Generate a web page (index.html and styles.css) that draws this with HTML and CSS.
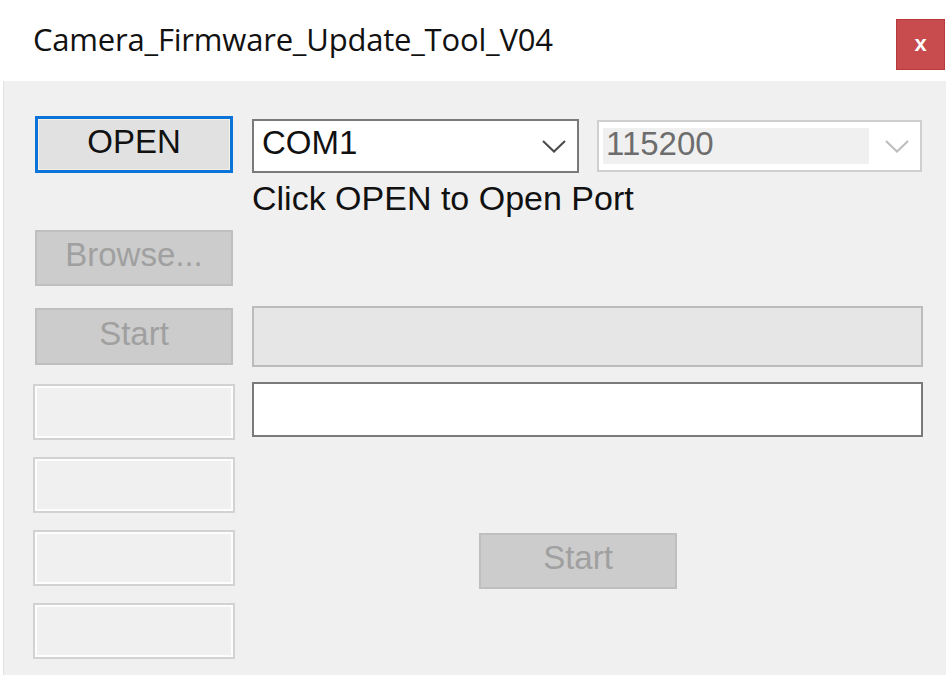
FILE: index.html
```html
<!DOCTYPE html>
<html lang="en">
<head>
    <meta charset="UTF-8">
    <title>Camera_Firmware_Update_Tool_V04</title>
    <link rel="stylesheet" href="styles.css">
</head>
<body>
    <div class="window">
        <div class="titlebar">
            <span class="title">Camera_Firmware_Update_Tool_V04</span>
            <button class="close">x</button>
        </div>
        <div class="client">
            <div class="left">
                <button class="btn btn-open">OPEN</button>
                <button class="btn btn-browse" disabled>Browse...</button>
                <button class="btn btn-start" disabled>Start</button>
                <div class="fields">
                    <div class="field"></div>
                    <div class="field"></div>
                    <div class="field"></div>
                    <div class="field"></div>
                </div>
            </div>
            <div class="right">
                <div class="combos">
                    <div class="combo combo-port">
                        <span class="combo-text">COM1</span>
                        <svg class="chevron" width="24" height="13" viewBox="0 0 24 13"><polyline points="1,1 12,11.5 23,1" fill="none" stroke="#4a4a4a" stroke-width="2"/></svg>
                    </div>
                    <div class="combo combo-baud">
                        <span class="combo-sel">115200</span>
                        <svg class="chevron" width="24" height="13" viewBox="0 0 24 13"><polyline points="1,1 12,11.5 23,1" fill="none" stroke="#bdbdbd" stroke-width="2"/></svg>
                    </div>
                </div>
                <div class="status">Click OPEN to Open Port</div>
                <div class="progress"></div>
                <div class="textbox"></div>
                <button class="btn btn-start2" disabled>Start</button>
            </div>
        </div>
    </div>
</body>
</html>
```

FILE: styles.css
```css
body {
    margin: 0;
    background-color: #fff;
    font-family: "Liberation Sans", Arial, sans-serif;
}
.window {
    width: 950px;
    height: 679px;
    background-color: #fff;
}
.titlebar {
    display: flex;
    justify-content: space-between;
    align-items: flex-start;
    height: 81px;
    padding: 0 5px 0 33px;
    box-sizing: border-box;
}
.title {
    font-family: "Open Sans", sans-serif;
    font-size: 31px;
    line-height: 32px;
    letter-spacing: -0.2px;
    color: #111;
    margin-top: 23px;
}
.close {
    width: 49px;
    height: 51px;
    margin-top: 19px;
    padding: 0 0 2px 0;
    border: 1px solid #b8393c;
    background-color: #c84b4e;
    color: #fff;
    font-family: "Liberation Sans", Arial, sans-serif;
    font-weight: bold;
    font-size: 22px;
}
.client {
    display: flex;
    gap: 17px;
    width: 943px;
    height: 594px;
    margin-left: 3px;
    padding-left: 29px;
    box-sizing: border-box;
    background-color: #f0f0f0;
    border-left: 1px solid #e2e2e2;
}
.left {
    display: flex;
    flex-direction: column;
    width: 202px;
}
.btn {
    display: flex;
    align-items: center;
    justify-content: center;
    width: 198px;
    height: 56px;
    margin: 0 2px;
    padding: 0 0 6px 0;
    box-sizing: border-box;
    font-family: "Liberation Sans", Arial, sans-serif;
    font-size: 33px;
    border: 2px solid #bfbfbf;
    background-color: #cccccc;
    color: #a0a0a0;
}
.btn-open {
    height: 57px;
    margin-top: 35px;
    border: 3px solid #0a74d8;
    box-shadow: inset 0 0 0 1px #f6efe4;
    background-color: #e1e1e1;
    color: #111;
}
.btn-browse {
    margin-top: 57px;
}
.btn-start {
    height: 57px;
    margin-top: 22px;
}
.fields {
    display: flex;
    flex-direction: column;
    gap: 17px;
    margin-top: 19px;
}
.field {
    height: 56px;
    border: 2px solid #d2d2d2;
    box-shadow: inset 0 0 0 2px #fdfdfd;
    background-color: #f0f0f0;
    box-sizing: border-box;
}
.right {
    display: flex;
    flex-direction: column;
    width: 671px;
}
.combos {
    display: flex;
    align-items: center;
    gap: 18px;
    height: 54px;
    margin-top: 38px;
}
.combo {
    display: flex;
    align-items: center;
    justify-content: space-between;
    box-sizing: border-box;
    background-color: #fff;
    font-size: 33px;
}
.combo-port {
    width: 327px;
    height: 54px;
    padding: 0 11px 0 8px;
    border: 2px solid #7a7a7a;
    color: #111;
}
.combo-text {
    padding-bottom: 6px;
}
.combo-baud {
    width: 325px;
    height: 52px;
    padding: 0 11px 0 4px;
    border: 2px solid #cfcfcf;
}
.combo-sel {
    width: 263px;
    height: 36px;
    line-height: 32px;
    padding-left: 3px;
    background-color: #f0f0f0;
    color: #6d6d6d;
}
.chevron {
    display: block;
}
.status {
    margin-top: 6px;
    font-size: 34px;
    line-height: 38px;
    color: #111;
}
.progress {
    height: 61px;
    margin-top: 89px;
    border: 2px solid #bcbcbc;
    background-color: #e6e6e6;
    box-sizing: border-box;
}
.textbox {
    height: 55px;
    margin-top: 15px;
    border: 2px solid #7a7a7a;
    background-color: #fff;
    box-sizing: border-box;
}
.btn-start2 {
    margin-top: 96px;
    margin-left: 227px;
}
```
